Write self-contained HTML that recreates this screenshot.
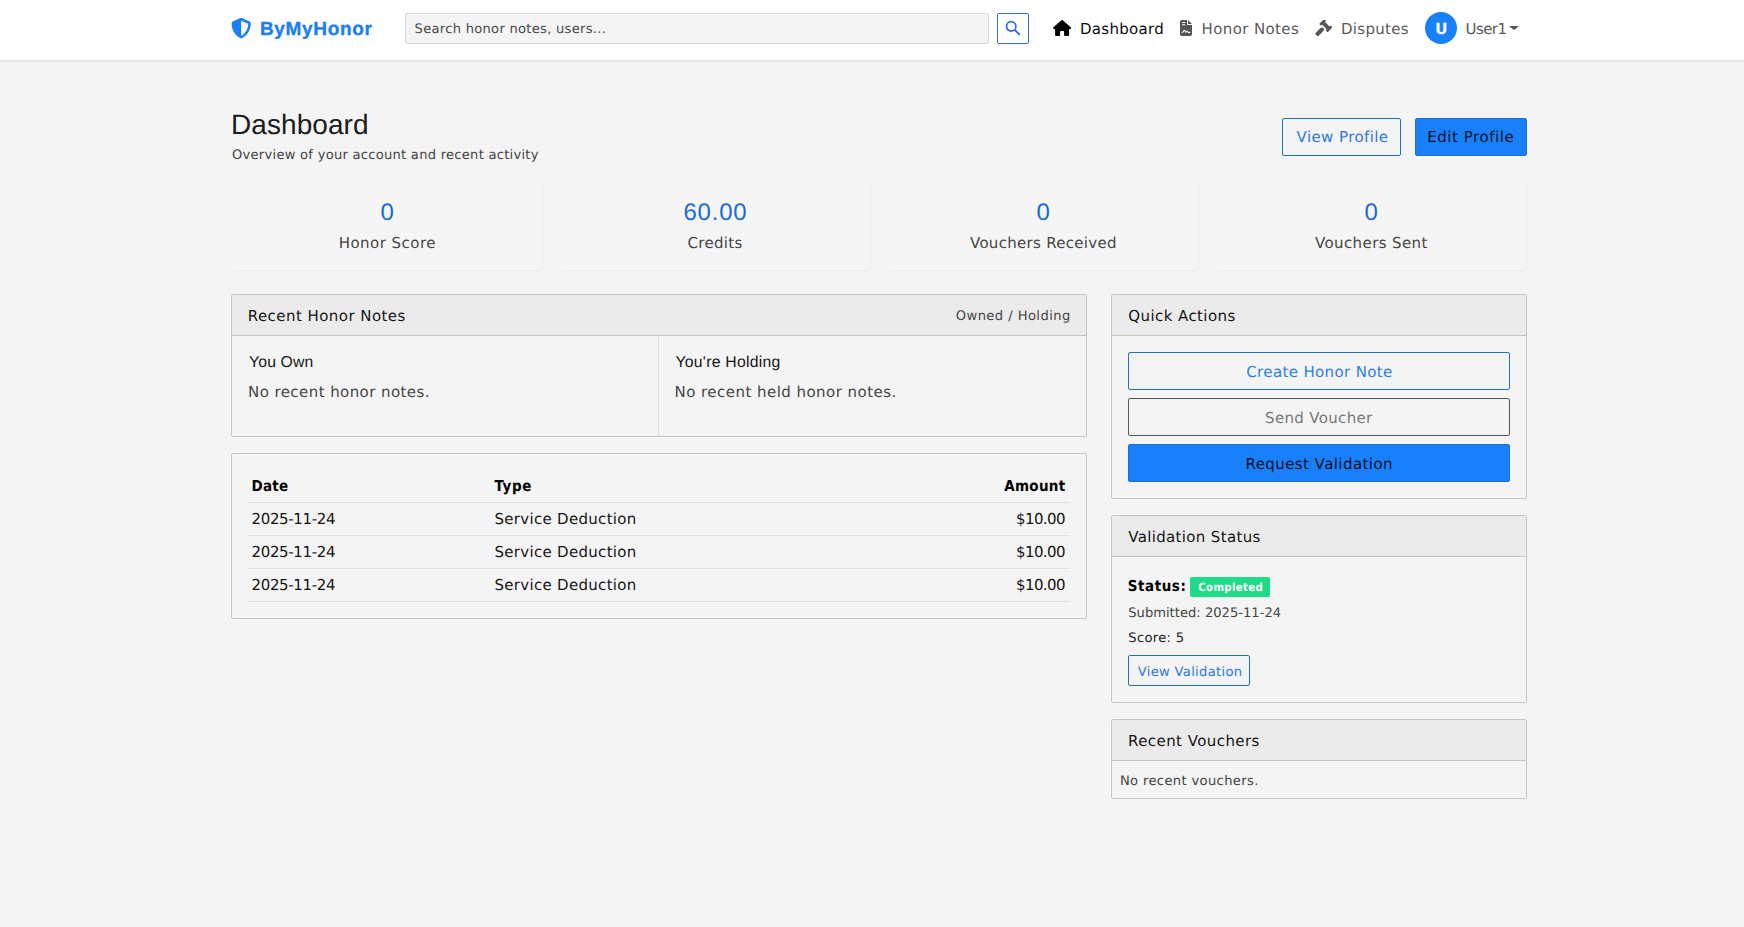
<!DOCTYPE html>
<html lang="en">
<head>
<meta charset="utf-8">
<title>Dashboard - ByMyHonor</title>
<style>
*{box-sizing:border-box;margin:0;padding:0}
html,body{width:1744px;height:927px;overflow:hidden}
body{background:#f4f4f4;font-family:"DejaVu Sans","Liberation Sans",sans-serif;font-size:14.5px;color:#151515;position:relative}
a{text-decoration:none}
.t{text-rendering:geometricPrecision;position:absolute;white-space:pre;line-height:20px;height:20px;font-weight:400;font-style:normal;display:block;z-index:5}
.fd{font-family:"DejaVu Sans","Liberation Sans",sans-serif}
.fc{font-family:"DejaVu Sans Condensed","DejaVu Sans","Liberation Sans",sans-serif}
.fl{font-family:"Liberation Sans",sans-serif}
.b{position:absolute;display:block}
nav{left:0;top:0;width:1744px;height:60px;background:#fff;box-shadow:0 1px 2px rgba(0,0,0,.07),0 2px 4px rgba(0,0,0,.03)}
.search{left:405px;top:13px;width:584px;height:31px;background:#f4f4f4;border:1px solid #d9d9d9;border-radius:2px}
.sbtn{left:997px;top:13px;width:32px;height:31px;border:1px solid #2f6fc9;border-radius:2px;background:#fff}
.avatar{left:1425px;top:12px;width:32px;height:32px;border-radius:50%;background:#1880fa}
.caret{left:1508.6px;top:26px;width:0;height:0;border-left:5px solid transparent;border-right:5px solid transparent;border-top:4.8px solid #555}
.stat{top:182px;width:312px;height:88px;background:#f5f5f5;border-radius:4px;box-shadow:0 1px 2px rgba(0,0,0,.04),0 0 2px rgba(0,0,0,.035)}
.card{border:1px solid #c7c7c7;background:#f4f4f4;border-radius:2px}
.chead{left:0;top:0;right:0;height:41px;background:#ebebeb;border-bottom:1px solid #c6c6c6}
.hl{height:1px;background:#dee2e6;left:248px;width:822px}
.btn{border-radius:2px;border:1px solid transparent}
.bp{background:#1880fa;border-color:#1b6fd7}
.bop{border-color:#1f6fd2}
.bos{border-color:#555}
.brand{-webkit-text-stroke:.35px #1a7ef8}
.badge{left:1190px;top:577px;width:80px;height:20px;background:#1edb88;border-radius:2px}
</style>
</head>
<body>
<nav class="b">
<a class="t fl brand" style="left:259.90px;top:20.00px;font-size:19px;color:#1a7ef8;letter-spacing:0.685px;font-weight:700;">ByMyHonor</a>
<span class="t fd ph" style="left:414.60px;top:20.30px;font-size:13.1px;color:#4a4a4a;letter-spacing:0.275px;">Search honor notes, users...</span>
<a class="t fd nl" style="left:1080.00px;top:18.80px;font-size:15px;color:#0c0c0c;letter-spacing:0.305px;">Dashboard</a>
<a class="t fd nl" style="left:1201.60px;top:18.80px;font-size:15px;color:#5a5a5a;letter-spacing:0.372px;">Honor Notes</a>
<a class="t fd nl" style="left:1341.00px;top:18.80px;font-size:15px;color:#5a5a5a;letter-spacing:0.290px;">Disputes</a>
<span class="t fd av" style="left:1435.00px;top:19.30px;font-size:15.5px;color:#ffffff;font-weight:700;">U</span>
<a class="t fd nl" style="left:1465.50px;top:18.80px;font-size:15px;color:#5a5a5a;letter-spacing:-0.572px;">User1</a>
</nav>
<svg class="b" style="left:231.05px;top:18.35px" width="20.4" height="20.4" viewBox="0 0 512 512"><path fill="#1a7ef8" d="M256 0c4.600 0 9.200 1 13.400 2.900L457.700 82.800c22 9.300 38.400 31 38.300 57.200c-.500 99.200-41.300 280.700-213.600 363.200c-16.700 8-36.100 8-52.800 0C57.300 420.700 16.500 239.200 16 140c-.100-26.200 16.300-47.900 38.300-57.200L242.700 2.900C246.800 1 251.400 0 256 0zm0 66.800V444.800C394 378 431.100 230.100 432 141.400L256 66.800z"/></svg>
<div class="b search"></div>
<div class="b sbtn"></div>
<svg class="b" style="left:1004px;top:19px" width="18" height="18" viewBox="0 0 18 18"><circle cx="7.2" cy="7.4" r="4.7" fill="none" stroke="#2a6fd6" stroke-width="1.7"/><path d="M10.6 10.9L15.2 15.3" stroke="#2a6fd6" stroke-width="1.9" stroke-linecap="round"/></svg>
<svg class="b" style="left:1052.5px;top:19.9px" width="18.2" height="16" viewBox="0 0 576 512"><path fill="#000" d="M288 0c7 0 15 2 21 7L565 232c8 7 12 15 11 24c0 18-15 32-32 32H512V472c0 22-18 40-40 40H392c-22 0-40-18-40-40V384c0-18-14-32-32-32H256c-18 0-32 14-32 32v88c0 22-18 40-40 40H104c-22 0-40-18-40-40V288H32c-18 0-32-14-32-32c0-9 3-17 10-24L266 8c7-7 15-8 22-8z"/></svg>
<svg class="b" style="left:1179.9px;top:19.9px" width="12" height="16" viewBox="0 0 384 512"><path fill="#555" d="M64 0C29 0 0 29 0 64V448c0 35 29 64 64 64H320c35 0 64-29 64-64V160H256c-18 0-32-14-32-32V0H64zM256 0V128H384L256 0z"/><path fill="#fff" d="M64 66h104v32H64zM64 132h104v32H64z"/><path fill="none" stroke="#fff" stroke-width="34" stroke-linecap="round" stroke-linejoin="round" d="M72 400c40 0 40-70 70-70c28 0 20 60 40 60c16 0 20-30 40-30c24 0 20 36 50 36h40"/></svg>
<svg class="b" style="left:1315px;top:19.9px" width="16.8" height="16.2" viewBox="0 0 16.8 16.2"><g fill="#555" transform="translate(10.9 5.6) rotate(45)"><rect x="-5.900" y="-3.500" width="2.700" height="7" rx=".8"/><rect x="3.200" y="-3.500" width="2.700" height="7" rx=".8"/><rect x="-3.600" y="-2" width="7.200" height="4"/><path d="M-.7 3.300h1.400l1.300 2.200v7.100a.8.800 0 0 1-.8.800h-2.400a.8.800 0 0 1-.8-.8V5.500z"/></g></svg>
<div class="b avatar"></div>
<div class="b caret"></div>

<div class="b btn bop" style="left:1282px;top:118px;width:119px;height:38px"></div>
<div class="b btn bp" style="left:1415px;top:118px;width:112px;height:38px"></div>

<div class="b stat" style="left:231px"></div>
<div class="b stat" style="left:559px"></div>
<div class="b stat" style="left:887px"></div>
<div class="b stat" style="left:1215px"></div>

<div class="b card" style="left:231px;top:294px;width:856px;height:143px"><div class="b chead"></div><div class="b" style="left:426px;top:41px;width:1px;bottom:0;background:#dee2e6"></div></div>
<div class="b card" style="left:231px;top:453px;width:856px;height:166px"></div>
<div class="b hl" style="top:502px"></div>
<div class="b hl" style="top:535px"></div>
<div class="b hl" style="top:568px"></div>
<div class="b hl" style="top:601px"></div>

<div class="b card" style="left:1111px;top:294px;width:416px;height:205px"><div class="b chead"></div></div>
<div class="b btn bop" style="left:1128px;top:352px;width:382px;height:38px"></div>
<div class="b btn bos" style="left:1128px;top:398px;width:382px;height:38px"></div>
<div class="b btn bp" style="left:1128px;top:444px;width:382px;height:38px"></div>

<div class="b card" style="left:1111px;top:515px;width:416px;height:188px"><div class="b chead"></div></div>
<div class="b badge"></div>
<div class="b btn bop" style="left:1128px;top:655px;width:122px;height:31px"></div>

<div class="b card" style="left:1111px;top:719px;width:416px;height:80px"><div class="b chead"></div></div>

<main>
<h1 class="t fl h1" style="left:231.00px;top:115.00px;font-size:28px;color:#1c1c1c;letter-spacing:0.074px;">Dashboard</h1>
<p class="t fd sub" style="left:232.00px;top:146.25px;font-size:13.1px;color:#444444;letter-spacing:0.254px;">Overview of your account and recent activity</p>
<span class="t fd btn" style="left:1295.55px;top:125.50px;font-size:15px;color:#2d78de;letter-spacing:0.407px;">View Profile</span>
<span class="t fd btn" style="left:1426.19px;top:125.50px;font-size:15px;color:#05101f;letter-spacing:0.547px;">Edit Profile</span>
<div class="t fl num" style="left:380.50px;top:203.00px;font-size:24px;color:#1c6bd0;">0</div>
<div class="t fd lab" style="left:338.75px;top:233.25px;font-size:15px;color:#444444;letter-spacing:0.459px;">Honor Score</div>
<div class="t fl num" style="left:683.50px;top:203.00px;font-size:24px;color:#1c6bd0;letter-spacing:0.760px;">60.00</div>
<div class="t fd lab" style="left:687.50px;top:233.25px;font-size:15px;color:#444444;letter-spacing:0.315px;">Credits</div>
<div class="t fl num" style="left:1036.50px;top:203.00px;font-size:24px;color:#1c6bd0;">0</div>
<div class="t fd lab" style="left:970.00px;top:233.25px;font-size:15px;color:#444444;letter-spacing:0.298px;">Vouchers Received</div>
<div class="t fl num" style="left:1364.50px;top:203.00px;font-size:24px;color:#1c6bd0;">0</div>
<div class="t fd lab" style="left:1315.00px;top:233.25px;font-size:15px;color:#444444;letter-spacing:0.394px;">Vouchers Sent</div>
<div class="t fd ch" style="left:247.75px;top:306.25px;font-size:15px;color:#151515;letter-spacing:0.445px;">Recent Honor Notes</div>
<small class="t fd sm" style="left:955.75px;top:307.00px;font-size:13.1px;color:#444444;letter-spacing:0.435px;">Owned / Holding</small>
<h6 class="t fl h6" style="left:249.00px;top:353.00px;font-size:15.75px;color:#151515;letter-spacing:0.154px;">You Own</h6>
<div class="t fd mut" style="left:248.00px;top:382.00px;font-size:15px;color:#444444;letter-spacing:0.427px;">No recent honor notes.</div>
<h6 class="t fl h6" style="left:675.50px;top:353.00px;font-size:15.75px;color:#151515;letter-spacing:0.260px;">You&#x27;re Holding</h6>
<div class="t fd mut" style="left:674.50px;top:382.00px;font-size:15px;color:#444444;letter-spacing:0.463px;">No recent held honor notes.</div>
<div class="t fc th" style="left:251.50px;top:476.25px;font-size:15px;color:#000000;letter-spacing:0.246px;font-weight:700;">Date</div>
<div class="t fc th" style="left:494.50px;top:476.25px;font-size:15px;color:#000000;letter-spacing:0.622px;font-weight:700;">Type</div>
<div class="t fc th" style="left:1004.25px;top:476.25px;font-size:15px;color:#000000;letter-spacing:0.300px;font-weight:700;">Amount</div>
<div class="t fd td" style="left:251.50px;top:509.25px;font-size:15px;color:#151515;letter-spacing:-0.348px;">2025-11-24</div>
<div class="t fd td" style="left:494.50px;top:509.25px;font-size:15px;color:#151515;letter-spacing:0.298px;">Service Deduction</div>
<div class="t fd td" style="left:1016.00px;top:509.25px;font-size:15px;color:#151515;letter-spacing:-0.588px;">$10.00</div>
<div class="t fd td" style="left:251.50px;top:542.25px;font-size:15px;color:#151515;letter-spacing:-0.348px;">2025-11-24</div>
<div class="t fd td" style="left:494.50px;top:542.25px;font-size:15px;color:#151515;letter-spacing:0.298px;">Service Deduction</div>
<div class="t fd td" style="left:1016.00px;top:542.25px;font-size:15px;color:#151515;letter-spacing:-0.588px;">$10.00</div>
<div class="t fd td" style="left:251.50px;top:575.25px;font-size:15px;color:#151515;letter-spacing:-0.348px;">2025-11-24</div>
<div class="t fd td" style="left:494.50px;top:575.25px;font-size:15px;color:#151515;letter-spacing:0.298px;">Service Deduction</div>
<div class="t fd td" style="left:1016.00px;top:575.25px;font-size:15px;color:#151515;letter-spacing:-0.588px;">$10.00</div>
<div class="t fd ch" style="left:1128.25px;top:306.25px;font-size:15px;color:#151515;letter-spacing:0.424px;">Quick Actions</div>
<span class="t fd btn" style="left:1245.29px;top:361.00px;font-size:15px;color:#2f7fe0;letter-spacing:0.362px;">Create Honor Note</span>
<span class="t fd btn" style="left:1264.08px;top:407.00px;font-size:15px;color:#777777;letter-spacing:0.335px;">Send Voucher</span>
<span class="t fd btn" style="left:1244.51px;top:453.25px;font-size:15px;color:#05101f;letter-spacing:0.426px;">Request Validation</span>
<div class="t fd ch" style="left:1128.25px;top:527.00px;font-size:15px;color:#151515;letter-spacing:0.339px;">Validation Status</div>
<strong class="t fc st" style="left:1127.80px;top:576.25px;font-size:15px;color:#000000;letter-spacing:0.538px;font-weight:700;">Status:</strong>
<span class="t fc bdg" style="left:1198.25px;top:578.25px;font-size:11.25px;color:#ffffff;letter-spacing:0.380px;font-weight:700;">Completed</span>
<div class="t fd sm" style="left:1128.25px;top:603.70px;font-size:13.1px;color:#444444;letter-spacing:0.011px;">Submitted: 2025-11-24</div>
<div class="t fd sm" style="left:1128.25px;top:628.50px;font-size:13.1px;color:#222222;letter-spacing:0.322px;">Score: 5</div>
<span class="t fd btn" style="left:1136.75px;top:662.25px;font-size:13.1px;color:#2d78de;letter-spacing:0.315px;">View Validation</span>
<div class="t fd ch" style="left:1128.00px;top:731.25px;font-size:15px;color:#151515;letter-spacing:0.433px;">Recent Vouchers</div>
<div class="t fd sm" style="left:1119.90px;top:771.90px;font-size:13.1px;color:#444444;letter-spacing:0.362px;">No recent vouchers.</div>
</main>
</body>
</html>
